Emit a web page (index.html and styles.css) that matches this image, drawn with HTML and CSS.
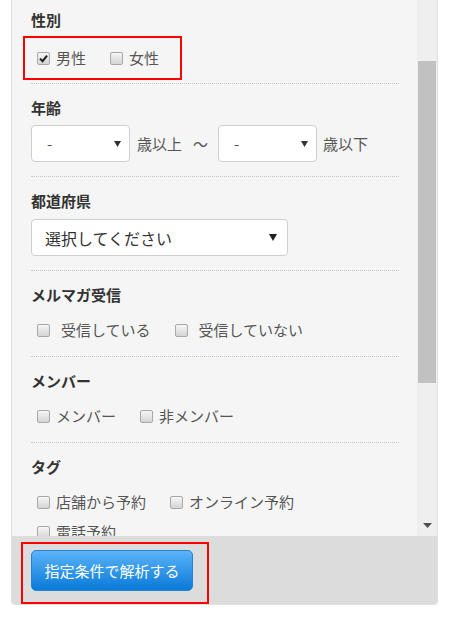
FILE: index.html
```html
<!DOCTYPE html>
<html lang="ja">
<head>
    <meta charset="UTF-8">
    <meta name="viewport" content="width=device-width, initial-scale=1.0">
    <title>解析条件</title>
    <link rel="stylesheet" href="styles.css">
</head>
<body>
    <div class="panel">
        <div class="scroll">
            <div class="fields">
                <div class="field field-first">
                    <div class="field-title">性別</div>
                    <div class="mark">
                        <div class="checks">
                            <label class="check"><span class="box"><svg width="9" height="9" viewBox="0 0 9 9"><path d="M1 4.6 L3.6 7.2 L8 1.6" fill="none" stroke="#1e1e1e" stroke-width="2"/></svg></span>男性</label>
                            <label class="check"><span class="box"></span>女性</label>
                        </div>
                    </div>
                </div>

                <div class="field">
                    <div class="field-title">年齢</div>
                    <div class="range">
                        <div class="select select-age"><span>-</span><svg class="caret" width="7" height="6" viewBox="0 0 7 6"><path d="M0 0 H7 L3.5 6 Z" fill="#333"/></svg></div>
                        <span class="unit">歳以上</span>
                        <span class="wave">～</span>
                        <div class="select select-age"><span>-</span><svg class="caret" width="7" height="6" viewBox="0 0 7 6"><path d="M0 0 H7 L3.5 6 Z" fill="#333"/></svg></div>
                        <span class="unit unit-last">歳以下</span>
                    </div>
                </div>

                <div class="field">
                    <div class="field-title">都道府県</div>
                    <div class="select select-pref"><span>選択してください</span><svg class="caret" width="8" height="7" viewBox="0 0 8 7"><path d="M0 0 H8 L4 7 Z" fill="#222"/></svg></div>
                </div>

                <div class="field">
                    <div class="field-title">メルマガ受信</div>
                    <div class="checks checks-wide">
                        <label class="check"><span class="box"></span>受信している</label>
                        <label class="check"><span class="box"></span>受信していない</label>
                    </div>
                </div>

                <div class="field">
                    <div class="field-title">メンバー</div>
                    <div class="checks">
                        <label class="check"><span class="box"></span>メンバー</label>
                        <label class="check"><span class="box"></span>非メンバー</label>
                    </div>
                </div>

                <div class="field">
                    <div class="field-title">タグ</div>
                    <div class="checks checks-tags">
                        <label class="check"><span class="box"></span>店舗から予約</label>
                        <label class="check"><span class="box"></span>オンライン予約</label>
                        <label class="check"><span class="box"></span>電話予約</label>
                    </div>
                </div>
            </div>
            <div class="scrollbar">
                <div class="thumb"></div>
                <svg class="arrow" width="9" height="5" viewBox="0 0 9 5"><path d="M0 0 H9 L4.5 5 Z" fill="#505050"/></svg>
            </div>
        </div>
        <div class="footer">
            <div class="mark mark-button">
                <button class="btn" type="button">指定条件で解析する</button>
            </div>
        </div>
    </div>
</body>
</html>
```

FILE: styles.css
```css
*{
    box-sizing: border-box;
}
body{
    margin: 0;
    background: #fff;
    font-family: "Noto Sans CJK JP", "Noto Sans", sans-serif;
    color: #555;
}

.panel{
    width: 427px;
    margin-left: 11px;
    border: 1px solid #e0e0e0;
    border-top: 0;
    border-radius: 0 0 4px 4px;
    overflow: hidden;
}
.scroll{
    display: flex;
    height: 536px;
    background: #f5f5f5;
}
.fields{
    flex: 1;
    overflow: hidden;
    padding: 0 18px 0 19px;
}

.field{
    padding: 14px 0;
    border-bottom: 1px dotted #c8c8c8;
}
.field-first{
    padding: 10px 0 3px;
}
.field-title{
    font-size: 15px;
    font-weight: bold;
    line-height: 20px;
    color: #333;
}

/* checkbox lists */
.checks{
    display: flex;
    flex-wrap: wrap;
    column-gap: 24px;
    row-gap: 6px;
    margin: 13px 0 0 6px;
}
.checks-tags{
    max-width: 300px;
}
.check{
    display: flex;
    align-items: center;
    gap: 6px;
    font-size: 15px;
    line-height: 24px;
    color: #555;
}
.checks-wide .check{
    gap: 11px;
}
.box{
    display: flex;
    align-items: center;
    justify-content: center;
    width: 13px;
    height: 13px;
    border: 1px solid #a8a8a8;
    border-radius: 2px;
    background: linear-gradient(#f6f6f6, #d4d4d4);
}

/* red highlight frame */
.mark{
    border: 2px solid #f00;
}
.field-first .mark{
    display: flex;
    align-items: center;
    width: 159px;
    height: 44px;
    margin: 6px 0 0 -8px;
    padding-left: 12px;
}
.field-first .checks{
    margin: 0;
}

/* selects */
.range{
    display: flex;
    align-items: center;
    margin-top: 7px;
}
.select{
    display: flex;
    align-items: center;
    justify-content: space-between;
    height: 37px;
    background: #fff;
    border: 1px solid #cfcfcf;
    border-radius: 4px;
}
.select-age{
    width: 99px;
    padding: 0 8px 0 15px;
    font-size: 15px;
    color: #555;
}
.select-pref{
    width: 257px;
    margin-top: 8px;
    padding: 0 10px 0 13px;
    font-size: 16px;
    color: #333;
}
.unit{
    margin-left: 7px;
    font-size: 15px;
}
.unit-last{
    margin-left: 6px;
}
.wave{
    margin: 0 10px 0 11px;
    font-size: 15px;
}

/* scrollbar */
.scrollbar{
    display: flex;
    flex-direction: column;
    align-items: center;
    width: 20px;
    padding: 61px 1px 8px;
    background: #efefef;
}
.thumb{
    width: 18px;
    height: 322px;
    background: #c1c1c1;
}
.arrow{
    margin-top: auto;
}

/* footer */
.footer{
    background: #dcdcdc;
    padding: 6px 0 0 9px;
}
.mark-button{
    display: inline-block;
    padding: 6px 14px 11px 8px;
}
.btn{
    display: block;
    width: 162px;
    height: 41px;
    border: 1px solid #2684d4;
    border-radius: 5px;
    background: linear-gradient(#5ab4f8, #0a79d8);
    color: #fff;
    font-family: inherit;
    font-size: 15px;
    padding: 0;
}
```
